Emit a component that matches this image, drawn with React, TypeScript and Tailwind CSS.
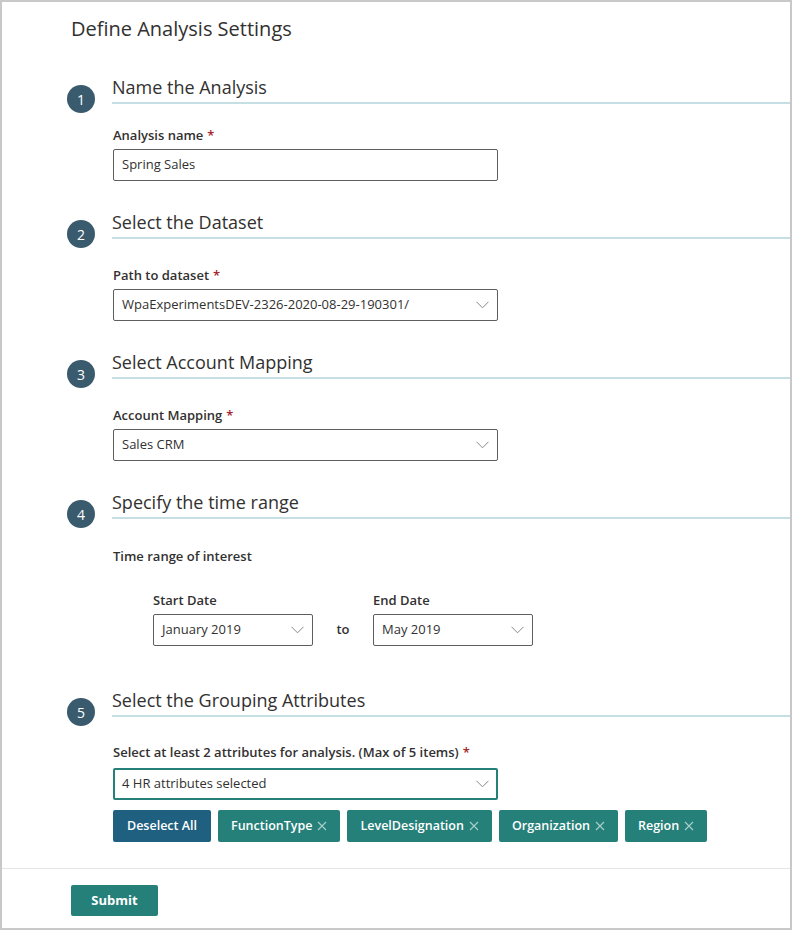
import React from "react";

const font = { fontFamily: '"Open Sans", "Noto Sans", sans-serif' };

function Chevron() {
  return (
    <svg width="13" height="8" viewBox="0 0 13 8" className="shrink-0">
      <path d="M0.5 0.8 L6.5 6.8 L12.5 0.8" fill="none" stroke="#8a8886" strokeWidth="1" />
    </svg>
  );
}

function XIcon() {
  return (
    <svg width="10" height="10" viewBox="0 0 10 10" className="shrink-0">
      <path d="M1 1 L9 9 M9 1 L1 9" stroke="#a9cfcb" strokeWidth="1.1" />
    </svg>
  );
}

function Label({ text, req = true }: { text: string; req?: boolean }) {
  return (
    <div className="text-[13px] leading-[20px] font-semibold text-[#323130]">
      {text}
      {req && <span className="text-[#a4262c] ml-[4px]">*</span>}
    </div>
  );
}

function Select({ value, w = "w-[385px]" }: { value: string; w?: string }) {
  return (
    <div className={`${w} h-[32px] border border-[#605e5c] rounded-[2px] flex items-center justify-between pl-[8px] pr-[8px] text-[13px] text-[#323130]`}>
      <span>{value}</span>
      <Chevron />
    </div>
  );
}

function Section({ n, title, mt, children }: { n: number; title: string; mt: string; children: React.ReactNode }) {
  return (
    <div className="flex pl-[65px]">
      <div className="w-[28px] h-[28px] mt-[10px] rounded-full bg-[#3a5b6d] text-white text-[14px] flex items-center justify-center shrink-0">
        {n}
      </div>
      <div className="flex-1 ml-[17px]">
        <h2 className="text-[18px] leading-[24px] pb-[3px] border-b-2 border-[#c6dfe4] text-[#323130] font-medium">
          {title}
        </h2>
        <div className={`pl-[1px] ${mt}`}>{children}</div>
      </div>
    </div>
  );
}

export default function App() {
  return (
    <div style={font} className="w-[792px] h-[930px] border-2 border-[#c8c8c8] bg-white flex flex-col">
      <div className="pl-[69px] pt-[13px] text-[20px] leading-[28px] text-[#323130] font-normal">Define Analysis Settings</div>
      <div className="mt-[32px] flex flex-col gap-[29px]">
        <Section n={1} title="Name the Analysis" mt="mt-[21px]">
          <Label text="Analysis name" />
          <div className="mt-[4px] w-[385px] h-[32px] border border-[#605e5c] rounded-[2px] flex items-center pl-[8px] text-[13px] text-[#323130]">
            Spring Sales
          </div>
        </Section>
        <Section n={2} title="Select the Dataset" mt="mt-[26px]">
          <Label text="Path to dataset" />
          <div className="mt-[4px]">
            <Select value="WpaExperimentsDEV-2326-2020-08-29-190301/" />
          </div>
        </Section>
        <Section n={3} title="Select Account Mapping" mt="mt-[26px]">
          <Label text="Account Mapping" />
          <div className="mt-[4px]">
            <Select value="Sales CRM" />
          </div>
        </Section>
        <Section n={4} title="Specify the time range" mt="mt-[27px]">
          <Label text="Time range of interest" req={false} />
          <div className="flex items-end pl-[40px] mt-[24px]">
            <div>
              <Label text="Start Date" req={false} />
              <div className="mt-[4px]">
                <Select value="January 2019" w="w-[160px]" />
              </div>
            </div>
            <div className="w-[60px] h-[32px] flex items-center justify-center text-[13px] font-semibold text-[#323130]">to</div>
            <div>
              <Label text="End Date" req={false} />
              <div className="mt-[4px]">
                <Select value="May 2019" w="w-[160px]" />
              </div>
            </div>
          </div>
          <div className="h-[13px]" />
        </Section>
        <Section n={5} title="Select the Grouping Attributes" mt="mt-[25px]">
          <Label text="Select at least 2 attributes for analysis. (Max of 5 items)" />
          <div className="mt-[6px] w-[385px] h-[32px] border-2 border-[#26807a] rounded-[2px] flex items-center justify-between pl-[7px] pr-[7px] text-[13px] text-[#323130]">
            <span>4 HR attributes selected</span>
            <Chevron />
          </div>
          <div className="mt-[10px] flex gap-[7px]">
            <div className="h-[32px] px-[14px] rounded-[2px] bg-[#1f6080] text-white text-[12.5px] font-semibold flex items-center">Deselect All</div>
            {["FunctionType", "LevelDesignation", "Organization", "Region"].map((t) => (
              <div key={t} className="h-[32px] px-[13px] rounded-[2px] bg-[#26807a] text-white text-[12.5px] font-semibold flex items-center gap-[5px]">
                {t}
                <XIcon />
              </div>
            ))}
          </div>
        </Section>
      </div>
      <div className="mt-[26px] border-t border-[#e5e5e5] pt-[16px] pl-[69px]">
        <div className="w-[87px] h-[31px] rounded-[2px] bg-[#26807a] text-white text-[13px] font-bold flex items-center justify-center">Submit</div>
      </div>
    </div>
  );
}
